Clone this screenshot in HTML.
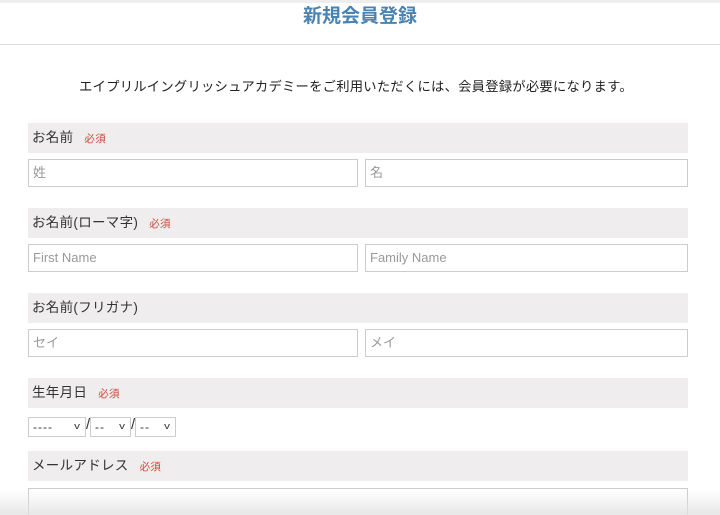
<!DOCTYPE html>
<html><head><meta charset="utf-8"><style>
html,body{margin:0;width:720px;height:515px;overflow:hidden}
body{background:#fff;font-family:"Liberation Sans","Noto Sans CJK JP",sans-serif;position:relative;color:#333}
.top{position:absolute;left:0;top:0;width:720px;height:3px;background:#eee}
.title{position:absolute;top:5px;left:0;width:720px;text-align:center;font-size:19px;font-weight:bold;color:#4a82b0;line-height:24px}
.hr{position:absolute;top:44px;left:0;width:720px;height:1px;background:#ddd}
.intro{position:absolute;top:76px;left:0;width:712px;text-align:center;font-size:13.3px;letter-spacing:0.25px;color:#222}
.bar{position:absolute;left:28px;width:660px;height:30px;background:#efeded;font-size:13.5px;line-height:29px;box-sizing:border-box;padding-left:4px;color:#333;letter-spacing:0.3px}
.bar span{color:#d0473a;font-size:10.5px;margin-left:11px}
.in{position:absolute;height:28px;border:1px solid #ccc;box-sizing:border-box;font-size:13px;color:#999;line-height:26px;padding-left:4px;background:#fff}
.l{left:28px;width:330px}.r{left:365px;width:323px}
.sel{position:absolute;top:417px;height:20px;border:1px solid #ccc;box-sizing:border-box;font-size:12px;line-height:18px;padding-left:4px;color:#333;background:#fff;letter-spacing:1px}
.sel i{position:absolute;right:5px;top:-1px;font-style:normal;font-size:9px;transform:scaleX(1.3)}
.sl{position:absolute;top:416px;font-size:15px;color:#333}
.shade{position:absolute;left:0;top:490px;width:720px;height:25px;background:linear-gradient(rgba(255,255,255,0),rgba(225,225,225,.8))}
</style></head><body>
<div class="top"></div>
<div class="title">新規会員登録</div>
<div class="hr"></div>
<div class="intro">エイプリルイングリッシュアカデミーをご利用いただくには、会員登録が必要になります。</div>
<div class="bar" style="top:123px">お名前<span>必須</span></div>
<div class="in l" style="top:159px">姓</div><div class="in r" style="top:159px">名</div>
<div class="bar" style="top:208px">お名前(ローマ字)<span>必須</span></div>
<div class="in l" style="top:244px">First Name</div><div class="in r" style="top:244px">Family Name</div>
<div class="bar" style="top:293px">お名前(フリガナ)</div>
<div class="in l" style="top:329px">セイ</div><div class="in r" style="top:329px">メイ</div>
<div class="bar" style="top:378px">生年月日<span>必須</span></div>
<div class="sel" style="left:28px;width:58px">----<i>v</i></div><div class="sl" style="left:86px">/</div>
<div class="sel" style="left:90px;width:41px">--<i>v</i></div><div class="sl" style="left:131px">/</div>
<div class="sel" style="left:135px;width:41px">--<i>v</i></div>
<div class="bar" style="top:451px">メールアドレス<span>必須</span></div>
<div class="in" style="top:488px;left:28px;width:660px;height:40px"></div>
<div class="shade"></div>
</body></html>
